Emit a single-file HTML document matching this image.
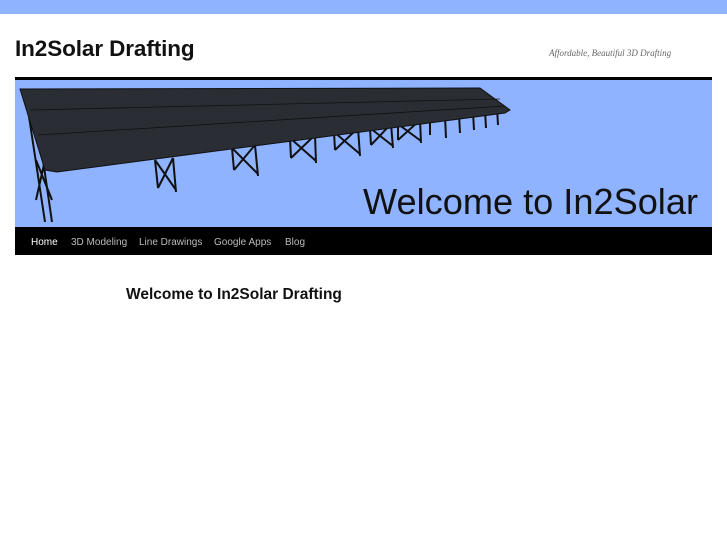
<!DOCTYPE html>
<html><head><style>
*{margin:0;padding:0}
body{width:727px;height:545px;background:#fff;position:relative;font-family:"Liberation Sans",sans-serif;overflow:hidden}
.top{position:absolute;left:0;top:0;width:727px;height:14px;background:#8fb3ff}
.title{position:absolute;left:15px;top:36px;font-size:22.5px;font-weight:bold;color:#111;letter-spacing:-0.1px}
.tag{position:absolute;left:549px;top:48px;font-family:"Liberation Serif",serif;font-style:italic;font-size:9px;color:#666}
.bar{position:absolute;left:15px;top:77px;width:697px;height:3px;background:#000}
.hero{position:absolute;left:15px;top:80px;width:697px;height:147px;background:#8fb3ff}
.nav{position:absolute;left:15px;top:227px;width:697px;height:28px;background:#000}
.nav span{position:absolute;top:10px;font-size:10px;color:#bbb}
h1{position:absolute;left:126px;top:286px;font-size:15.5px;font-weight:bold;color:#111}
</style></head><body>
<div class="top"></div>
<div class="title">In2Solar Drafting</div>
<div class="tag">Affordable, Beautiful 3D Drafting</div>
<div class="bar"></div>
<div class="hero">
<svg width="697" height="147" viewBox="15 80 697 147" xmlns="http://www.w3.org/2000/svg">
<g stroke="#111" stroke-width="2" fill="none">
<path d="M28 110 L45 222 M36 112 L52 222 M36 160 L52 200 M45 160 L36 200"/>
<path d="M155 160 L158 188 M173 158 L176 192 M155 160 L176 190 M173 158 L158 188"/>
<path d="M232 148 L234 170 M255 145 L258 176 M232 148 L258 174 M255 145 L234 170"/>
<path d="M290 138 L291 158 M315 135 L316 163 M290 138 L316 161 M315 135 L291 158"/>
<path d="M334 132 L335 150 M358 128 L360 156 M334 132 L360 154 M358 128 L335 150"/>
<path d="M370 128 L371 145 M391 124 L393 148 M370 128 L393 146 M391 124 L371 145"/>
<path d="M398 124 L398 140 M420 120 L421 143 M398 124 L421 141 M420 120 L398 140"/>
<path d="M430 120 L430 135 M445 116 L446 138 M459 114 L460 133 M473 112 L474 130 M485 110 L486 128 M497 108 L498 125"/>
</g>
<polygon points="20,89 480,88 510,110 505,113 57,172 45,170" fill="#2a2d33" stroke="#111"/>
<g stroke="#111" stroke-width="0.8">
<path d="M30 110 L500 99 M38 135 L505 106"/>
</g>
<text x="363" y="214" font-family="Liberation Sans,sans-serif" font-size="36" fill="#111" textLength="335" lengthAdjust="spacingAndGlyphs">Welcome to In2Solar</text>
</svg>
</div>
<div class="nav">
<span style="left:16px;color:#fff">Home</span>
<span style="left:56px">3D Modeling</span>
<span style="left:124px">Line Drawings</span>
<span style="left:199px">Google Apps</span>
<span style="left:270px">Blog</span>
</div>
<h1>Welcome to In2Solar Drafting</h1>
</body></html>
